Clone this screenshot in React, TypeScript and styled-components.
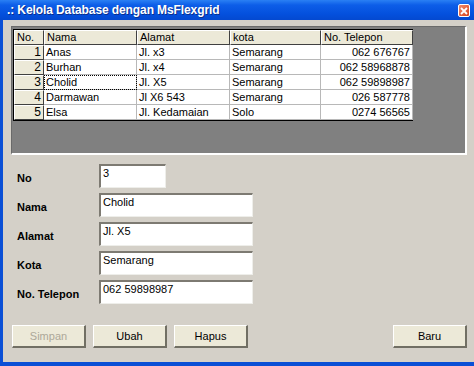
import { Fragment } from "react";
import styled, { createGlobalStyle } from "styled-components";

const Global = createGlobalStyle`
  html, body {
    margin: 0;
    padding: 0;
    background: #d4d0c8;
    overflow: hidden;
  }
  * { box-sizing: border-box; }
`;

const Window = styled.div`
  width: 474px;
  height: 366px;
  display: flex;
  flex-direction: column;
  background: #d4d0c8;
  border-left: 3px solid #0a4fd6;
  border-bottom: 4px solid #0a4fd6;
  font-family: "Liberation Sans", Arial, sans-serif;
  font-size: 11px;
  color: #000;
`;

const TitleBar = styled.div`
  height: 20px;
  margin-left: -3px;
  display: flex;
  align-items: center;
  justify-content: space-between;
  padding: 0 4px 0 7px;
  background: linear-gradient(#2a80f4 0%, #0d5ee8 25%, #0450dd 70%, #0449d0 100%);
  color: #fff;
`;

const Title = styled.span`
  font-weight: bold;
  font-size: 12px;
  letter-spacing: -0.1px;
  text-shadow: 1px 1px 0 #0b2f8c;
`;

const CloseButton = styled.div`
  width: 12px;
  height: 13px;
  margin-top: 1px;
  border: 1px solid #fff;
  border-radius: 2px;
  background: linear-gradient(135deg, #f08a6a, #d9441c);
  display: flex;
  align-items: center;
  justify-content: center;
`;

const Body = styled.div`
  flex: 1;
  display: flex;
  flex-direction: column;
  padding: 6px 7px 0 8px;
`;

const GridPanel = styled.div`
  height: 129px;
  background: #808080;
  border-top: 1px solid #6a6a6a;
  border-left: 1px solid #6a6a6a;
  border-right: 2px solid #fff;
  border-bottom: 2px solid #fff;
  padding: 2px 0 0 1px;
`;

const Grid = styled.div`
  display: grid;
  grid-template-columns: 30px 93px 93px 91px 92px;
  grid-auto-rows: 15px;
  width: max-content;
  border-top: 1px solid #000;
  border-left: 1px solid #000;
  border-bottom: 1px solid #000;
`;

const HeadCell = styled.div`
  background: #ece9d8;
  border-top: 1px solid #fff;
  border-left: 1px solid #fff;
  border-right: 1px solid #404040;
  border-bottom: 1px solid #404040;
  padding: 0 2px;
  line-height: 12px;
  font-size: 11px;
  white-space: nowrap;
  overflow: hidden;
`;

const FixedCell = styled(HeadCell)`
  text-align: right;
  font-size: 12px;
`;

const Cell = styled.div<{ $right?: boolean; $focus?: boolean }>`
  background: #fff;
  border-right: 1px solid #b8b8b8;
  border-bottom: 1px solid #b8b8b8;
  padding: 0 2px;
  line-height: 14px;
  font-size: 11px;
  white-space: nowrap;
  overflow: hidden;
  text-align: ${(p) => (p.$right ? "right" : "left")};
  outline: ${(p) => (p.$focus ? "1px dotted #000" : "none")};
  outline-offset: -1px;
`;

const Form = styled.div`
  display: flex;
  flex-direction: column;
  gap: 5px;
  padding: 9px 0 0 6px;
`;

const Row = styled.div`
  display: flex;
  align-items: center;
  height: 24px;
`;

const Label = styled.label`
  width: 82px;
  font-weight: bold;
  font-size: 11px;
  padding-top: 3px;
`;

const TextBox = styled.div<{ $w: number }>`
  width: ${(p) => p.$w}px;
  height: 24px;
  background: #fff;
  border-top: 2px solid #7d7a72;
  border-left: 2px solid #7d7a72;
  border-right: 1px solid #eeeeea;
  border-bottom: 1px solid #eeeeea;
  padding: 1px 2px;
  font-size: 11px;
  line-height: 13px;
`;

const ButtonRow = styled.div`
  display: flex;
  gap: 7px;
  margin-top: 21px;
  padding-left: 1px;
`;

const Spacer = styled.div`
  flex: 1;
`;

const Button = styled.div<{ $disabled?: boolean }>`
  width: 74px;
  height: 23px;
  display: flex;
  align-items: center;
  justify-content: center;
  background: #ece9d8;
  border-top: 1px solid #fff;
  border-left: 1px solid #fff;
  border-right: 2px solid #716f64;
  border-bottom: 2px solid #716f64;
  font-size: 11px;
  color: ${(p) => (p.$disabled ? "#aca899" : "#000")};
`;

const rows = [
  ["1", "Anas", "Jl. x3", "Semarang", "062 676767"],
  ["2", "Burhan", "Jl. x4", "Semarang", "062 58968878"],
  ["3", "Cholid", "Jl. X5", "Semarang", "062 59898987"],
  ["4", "Darmawan", "Jl X6 543", "Semarang", "026 587778"],
  ["5", "Elsa", "Jl. Kedamaian", "Solo", "0274 56565"],
];

const headers = ["No.", "Nama", "Alamat", "kota", "No. Telepon"];

const fields = [
  { label: "No", value: "3", w: 67 },
  { label: "Nama", value: "Cholid", w: 154 },
  { label: "Alamat", value: "Jl. X5", w: 154 },
  { label: "Kota", value: "Semarang", w: 154 },
  { label: "No. Telepon", value: "062 59898987", w: 154 },
];

export default function App() {
  return (
    <>
      <Global />
      <Window>
        <TitleBar>
          <Title>.: Kelola Database dengan MsFlexgrid</Title>
          <CloseButton>
            <svg width="8" height="8" viewBox="0 0 8 8">
              <path d="M1 1L7 7M7 1L1 7" stroke="#fff" strokeWidth="1.8" />
            </svg>
          </CloseButton>
        </TitleBar>
        <Body>
          <GridPanel>
            <Grid>
              {headers.map((h) => (
                <HeadCell key={h}>{h}</HeadCell>
              ))}
              {rows.map((r, i) => (
                <Fragment key={i}>
                  <FixedCell>{r[0]}</FixedCell>
                  <Cell $focus={i === 2}>{r[1]}</Cell>
                  <Cell>{r[2]}</Cell>
                  <Cell>{r[3]}</Cell>
                  <Cell $right>{r[4]}</Cell>
                </Fragment>
              ))}
            </Grid>
          </GridPanel>
          <Form>
            {fields.map((f) => (
              <Row key={f.label}>
                <Label>{f.label}</Label>
                <TextBox $w={f.w}>{f.value}</TextBox>
              </Row>
            ))}
          </Form>
          <ButtonRow>
            <Button $disabled>Simpan</Button>
            <Button>Ubah</Button>
            <Button>Hapus</Button>
            <Spacer />
            <Button>Baru</Button>
          </ButtonRow>
        </Body>
      </Window>
    </>
  );
}
